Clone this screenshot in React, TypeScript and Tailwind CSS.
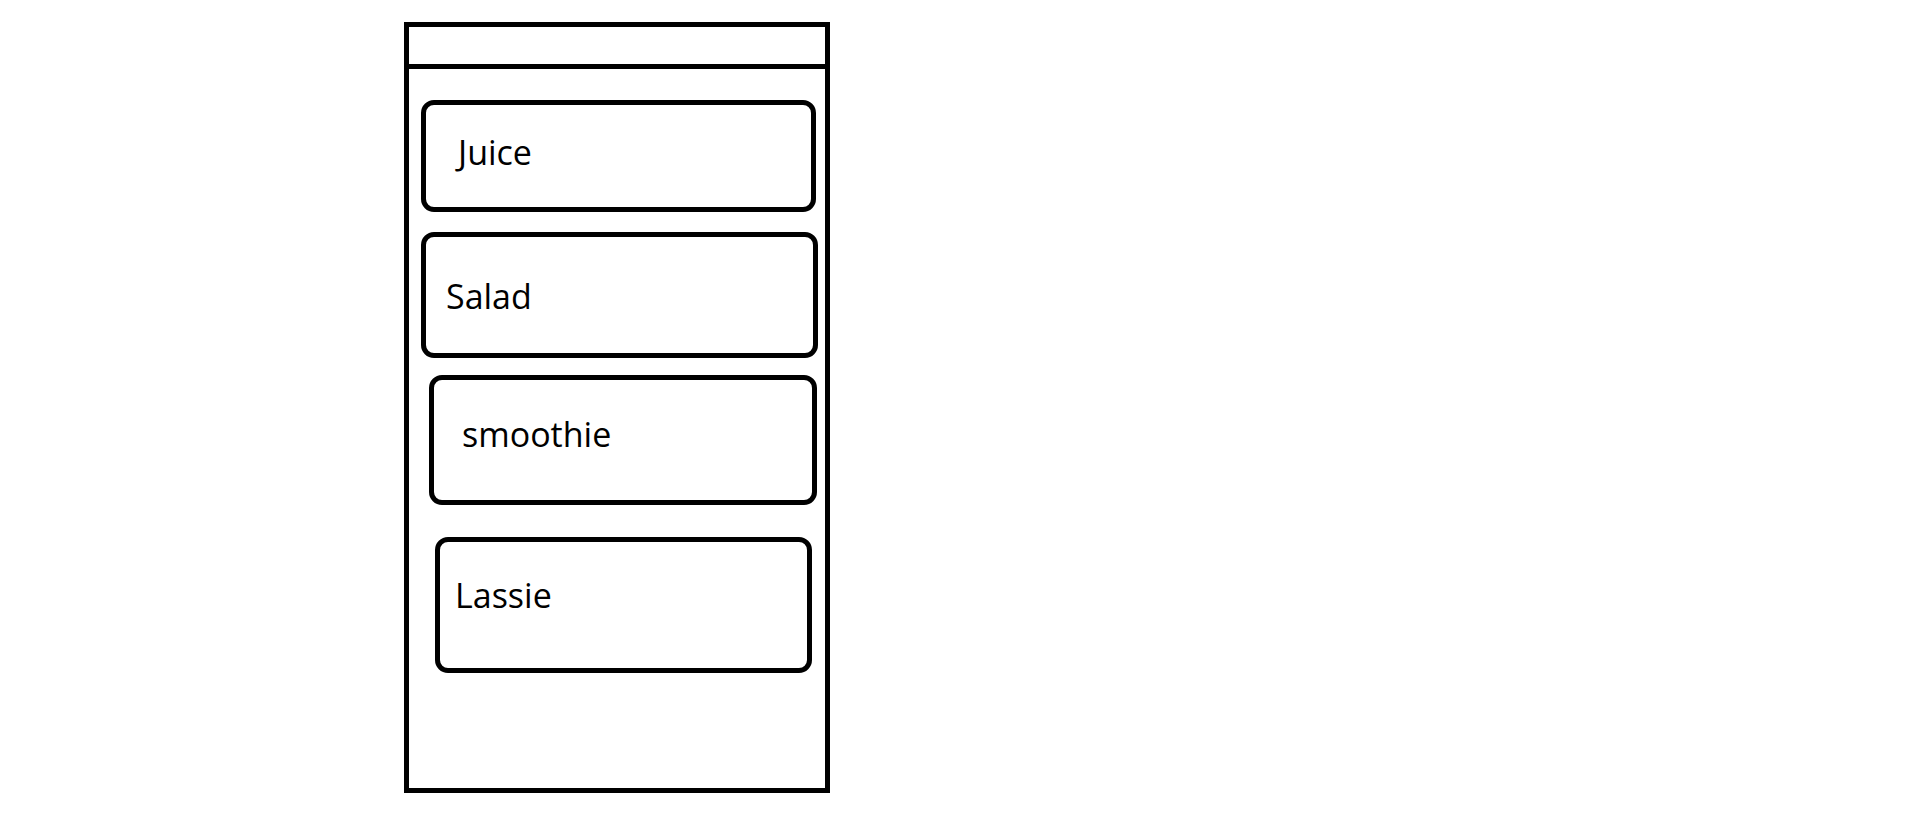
import React from 'react';

const items = [
  { label: 'Juice', box: 'mt-[31px] ml-[12px] mr-[9px] h-[112px]', text: 'pt-[22px] pl-[32px]' },
  { label: 'Salad', box: 'mt-[20px] ml-[12px] mr-[7px] h-[126px]', text: 'pt-[34px] pl-[20px]' },
  { label: 'smoothie', box: 'mt-[17px] ml-[20px] mr-[8px] h-[130px]', text: 'pt-[29px] pl-[28px]' },
  { label: 'Lassie', box: 'mt-[32px] ml-[26px] mr-[13px] h-[136px]', text: 'pt-[28px] pl-[15px]' },
];

const App: React.FC = () => {
  return (
    <div className="min-h-screen bg-white pt-[22px] pl-[404px]" style={{ fontFamily: '"Open Sans", "Noto Sans", sans-serif' }}>
      {/* Phone frame */}
      <div className="w-[426px] h-[771px] border-[5px] border-black flex flex-col">
        {/* Header bar */}
        <div className="h-[42px] border-b-[5px] border-black" />

        {/* Menu list */}
        {items.map((item) => (
          <div key={item.label} className={`${item.box} border-[5px] border-black rounded-[13px]`}>
            <div className={`${item.text} text-[34px] text-black`}>{item.label}</div>
          </div>
        ))}
      </div>
    </div>
  );
};

export default App;
